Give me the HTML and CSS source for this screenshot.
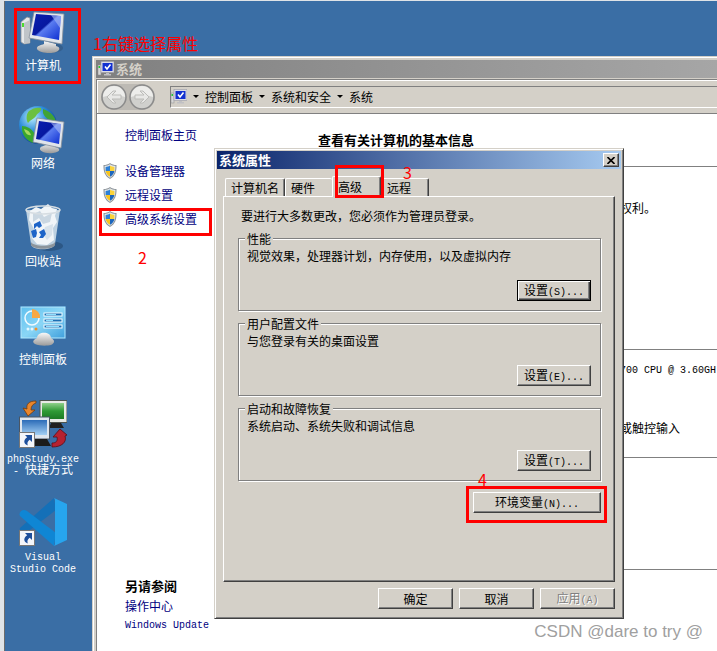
FILE: index.html
```
<!DOCTYPE html>
<html lang="zh-CN">
<head>
	<title>系统属性</title>
	<meta charset="utf-8">
	<link rel="stylesheet" href="styles.css">
</head>
<body>
	<!-- 公用图标 -->
	<svg class="defs" width="0" height="0">
		<defs>
			<linearGradient id="screen" x1="0" y1="0" x2="1" y2="1">
				<stop offset="0" stop-color="#0a1fb0"/>
				<stop offset="0.45" stop-color="#0618a0"/>
				<stop offset="0.5" stop-color="#5a7cf0"/>
				<stop offset="1" stop-color="#0a2bd0"/>
			</linearGradient>
			<linearGradient id="metal" x1="0" y1="0" x2="0" y2="1">
				<stop offset="0" stop-color="#f8f8f8"/>
				<stop offset="1" stop-color="#9a9a9a"/>
			</linearGradient>
			<radialGradient id="globe" cx="0.35" cy="0.3" r="0.75">
				<stop offset="0" stop-color="#b8ecff"/>
				<stop offset="0.5" stop-color="#2b8ad8"/>
				<stop offset="1" stop-color="#0b3c86"/>
			</radialGradient>
			<linearGradient id="panel" x1="0" y1="0" x2="1" y2="1">
				<stop offset="0" stop-color="#5fc0ee"/>
				<stop offset="0.5" stop-color="#8ad6f6"/>
				<stop offset="1" stop-color="#3f9fdc"/>
			</linearGradient>
			<linearGradient id="green" x1="0" y1="0" x2="0" y2="1">
				<stop offset="0" stop-color="#8fd08a"/>
				<stop offset="0.5" stop-color="#2f9a35"/>
				<stop offset="1" stop-color="#1c7a24"/>
			</linearGradient>
			<linearGradient id="sky" x1="0" y1="0" x2="0" y2="1">
				<stop offset="0" stop-color="#2c6cb8"/>
				<stop offset="1" stop-color="#a4d0f4"/>
			</linearGradient>
		</defs>
		<symbol id="shield" viewBox="0 0 14 16">
			<path d="M7 0C5 1.500 3 2 .5 2C.3 8 1.500 13 7 16C12.500 13 13.700 8 13.500 2C11 2 9 1.500 7 0Z" fill="#8e959b"/>
			<path d="M7 1.300C5.200 2.500 3.500 3 1.600 3C1.500 8 2.600 12.300 7 14.800C11.400 12.300 12.500 8 12.400 3C10.500 3 8.800 2.500 7 1.300Z" fill="#e4e8ea"/>
			<path d="M7 2.500C5.500 3.500 4.200 3.900 2.600 4V8H7Z" fill="#2c7fd6"/>
			<path d="M7 2.500C8.500 3.500 9.800 3.900 11.400 4V8H7Z" fill="#fbd33a"/>
			<path d="M2.600 8C3 10.500 4.500 12.500 7 13.700V8Z" fill="#f8c41e"/>
			<path d="M11.400 8C11 10.500 9.500 12.500 7 13.700V8Z" fill="#1c66bd"/>
		</symbol>
		<symbol id="pc" viewBox="0 0 16 16">
			<rect x="0" y="4" width="3" height="10" fill="#d8d8d8" stroke="#8a8a8a" stroke-width=".5"/>
			<rect x="0.500" y="5" width="1.500" height="2" fill="#2c3"/>
			<rect x="3" y="0.500" width="13" height="11" fill="#dcdce4" stroke="#9a9aa4" stroke-width=".6"/>
			<rect x="4.500" y="2" width="10" height="8" fill="#1230d0"/>
			<path d="M7 5.500L9 8L12.500 3.500" fill="none" stroke="#fff" stroke-width="1.600"/>
			<path d="M8 12H11V13H13V14.500H6V13H8Z" fill="#c0c0c4"/>
		</symbol>
		<symbol id="shortcut" viewBox="0 0 16 16">
			<rect x="0.500" y="0.500" width="15" height="15" fill="#f4f6fa" stroke="#777"/>
			<path d="M6 3H13V10L10.700 7.800C8.500 9.500 8 11 8.800 13.500C4.500 12 4 8 8.200 5.300Z" fill="#1d4f9c"/>
		</symbol>
	</svg>

	<div class="desktop">
		<ul class="icons">
			<li>
				<svg width="48" height="48" viewBox="0 0 48 48">
					<path d="M2 14L8 9L11 10V35L5 36L2 34Z" fill="#e6e8ea" stroke="#8b9096" stroke-width=".8"/>
					<path d="M5 15L11 12V35L5 36Z" fill="#bfc4c8"/>
					<rect x="3" y="15" width="2" height="4" fill="#4ddb2e"/>
					<ellipse cx="31" cy="40" rx="13" ry="5" fill="#2d4f75" opacity=".5"/>
					<path d="M25 33L37 36L37 38C41 39 42 42 37 44C32 46 20 45 18 41C17 38 22 37 25 36Z" fill="url(#metal)"/>
					<path d="M15 4L45 6L43 36L10 30Z" fill="#e3e7ec" stroke="#87909a" stroke-width=".8"/>
					<path d="M17 6L42 8L40 32L13 27Z" fill="url(#screen)"/>
					<path d="M32 7L42 8L41 20Z" fill="#9fb3f4" opacity=".65"/>
				</svg>
				<span>计算机</span>
			</li>
			<li>
				<svg width="48" height="48" viewBox="0 0 48 48">
					<circle cx="19" cy="19" r="19" fill="url(#globe)"/>
					<path d="M10 5C14 2 18 1 22 2C23 6 18 7 17 10C15 13 11 14 9 17C7 14 7 8 10 5Z" fill="#6cc040"/>
					<path d="M3 20C8 20 13 23 15 27C16 31 14 34 14 37C7 34 2 28 3 20Z" fill="#3aa72e"/>
					<path d="M24 3C31 5 37 11 37 17L31 14C28 13 25 10 24 7Z" fill="#41a334"/>
					<path d="M5 23C9 24 11 26 12 29C9 30 6 27 5 23Z" fill="#c4e56c" opacity=".8"/>
					<path d="M27 36L36 37V41C42 42 42 46 34 47C26 48 20 45 21 42C22 40 25 40 27 39Z" fill="url(#metal)"/>
					<path d="M18 12L45 16L42 42L14 36Z" fill="#e0e4ea" stroke="#848e99" stroke-width=".8"/>
					<path d="M20 15L42 18L40 38L17 33Z" fill="url(#screen)"/>
					<path d="M32 17L42 18L41 28Z" fill="#a7baf6" opacity=".65"/>
				</svg>
				<span>网络</span>
			</li>
			<li>
				<svg width="48" height="48" viewBox="0 0 48 48">
					<ellipse cx="30" cy="42" rx="14" ry="5" fill="#234870" opacity=".6"/>
					<path d="M7 6L12 40C12 47 35 47 36 40L41 6Z" fill="#c9d9e6" opacity=".92"/>
					<path d="M11 7L17 3L22 5L29 0L33 4L38 5L36 12L38 18L34 24L35 36L28 41L18 40L13 34L15 25L10 16Z" fill="#f1f5f8"/>
					<path d="M14 10L21 7L25 13L33 9L31 18L24 20L20 14L14 18Z" fill="#cad7e2"/>
					<path d="M26 23L34 20L33 31L28 36L24 30Z" fill="#d7e2eb"/>
					<path d="M12 38C15 43 33 43 36 38L36 41C34 46 14 46 12 41Z" fill="#8c949b"/>
					<ellipse cx="24" cy="6" rx="17" ry="4" fill="none" stroke="#d6dde2" stroke-width="1.500"/>
					<path d="M15 20L21 17L23 22L20 24L18 22L15 25ZM12 27L17 25L18 29L17 33L14 34ZM20 28L25 25L27 30L24 34H20L22 31Z" fill="#1d64c8"/>
				</svg>
				<span>回收站</span>
			</li>
			<li>
				<svg width="48" height="48" viewBox="0 0 48 48">
					<rect x="1" y="4" width="46" height="33" fill="#2b78b8"/>
					<rect x="2" y="5" width="44" height="31" fill="url(#panel)" stroke="#b7e6fa"/>
					<circle cx="13" cy="16" r="7" fill="none" stroke="#f0fbff" stroke-width="1.500"/>
					<path d="M13 16V7A8 8 0 0 1 21 16Z" fill="#f6a843"/>
					<circle cx="9" cy="27" r="1.500" fill="#e3f7ff"/>
					<circle cx="13" cy="27" r="1.500" fill="#e3f7ff"/>
					<circle cx="17" cy="27" r="1.500" fill="#f28f2a"/>
					<g fill="#1c6fb4" stroke="#f3fcff">
						<rect x="25" y="11" width="18" height="3"/>
						<rect x="25" y="17" width="18" height="3"/>
						<rect x="25" y="23" width="18" height="3"/>
					</g>
					<path d="M27 12.500H37M27 18.500H34M27 24.500H40" stroke="#8ee0ff"/>
					<path d="M18 36C18 29 32 29 32 36C36 38 36 41 32 43C28 44 20 44 16 42C13 40 14 38 18 36Z" fill="url(#metal)"/>
				</svg>
				<span>控制面板</span>
			</li>
			<li>
				<svg width="48" height="48" viewBox="0 0 48 48">
					<rect x="21" y="0.500" width="27" height="22" fill="#e8eae6" stroke="#4c524c"/>
					<rect x="23" y="3" width="22" height="16" fill="url(#green)"/>
					<path d="M32 23H42L45 28H30Z" fill="#202020"/>
					<rect x="0.500" y="17" width="30" height="22" fill="#dfe6ee" stroke="#4a5664"/>
					<rect x="3" y="20" width="25" height="15" fill="url(#sky)"/>
					<path d="M14 39H28L32 46H14Z" fill="#1b1b1b"/>
					<path d="M17 1C10 1 7 4 8 9L4 8L9 16L16 10L12 10C12 6 14 4 17 3Z" fill="#e9862c" stroke="#7a3c08" stroke-width=".8"/>
					<path d="M33 47C43 47 48 42 46 36L48 35L41 29L34 37H38C39 41 37 43 33 43Z" fill="#b62230" stroke="#5f0a12" stroke-width=".8"/>
					<use href="#shortcut" x="0" y="32" width="16" height="16"/>
				</svg>
				<span><span class="latin">phpStudy.exe</span><br><span class="latin">- </span>快捷方式</span>
			</li>
			<li>
				<svg width="48" height="48" viewBox="0 0 48 48">
					<path d="M35 0L1 30C0 33 4 37 7 35L37 12Z" fill="#1470b8"/>
					<path d="M1 18C-1 14 4 10 8 13L37 35L35 48Z" fill="#0f86d4"/>
					<path d="M35 0L48 6V42L35 48C36 47 36 46 36 45V3C36 2 36 1 35 0Z" fill="#27a5ee"/>
					<use href="#shortcut" x="0" y="32" width="16" height="16"/>
				</svg>
				<span><span class="latin">Visual</span><br><span class="latin">Studio Code</span></span>
			</li>
		</ul>

		<!-- 系统窗口 -->
		<div class="window system">
			<div class="title inactive">
				<svg width="16" height="16"><use href="#pc"/></svg>
				系统
			</div>
			<div class="toolbar">
				<div class="nav">
					<button aria-label="后退">
						<svg width="26" height="26" viewBox="0 0 26 26">
							<circle cx="13" cy="13" r="12" fill="#d0d0cd" stroke="#8b8b8b" stroke-width="1.500"/>
							<path d="M2 13A11 11 0 0 1 24 13Q13 9 2 13Z" fill="#ededeb"/>
							<path d="M6 13L12 7H15L11 11H20V15H11L15 19H12Z" fill="#e8e8e6" stroke="#bcbcb9"/>
						</svg>
					</button>
					<button aria-label="前进">
						<svg width="26" height="26" viewBox="0 0 26 26">
							<circle cx="13" cy="13" r="12" fill="#d0d0cd" stroke="#8b8b8b" stroke-width="1.500"/>
							<path d="M2 13A11 11 0 0 1 24 13Q13 9 2 13Z" fill="#ededeb"/>
							<path d="M20 13L14 7H11L15 11H6V15H15L11 19H14Z" fill="#e8e8e6" stroke="#bcbcb9"/>
						</svg>
					</button>
				</div>
				<div class="address">
					<svg width="16" height="16"><use href="#pc"/></svg>
					<i class="arrow"></i><span>控制面板</span>
					<i class="arrow"></i><span>系统和安全</span>
					<i class="arrow"></i><span>系统</span>
				</div>
			</div>
			<div class="content">
				<div class="sidebar">
					<a class="home" href="#">控制面板主页</a>
					<a class="task" href="#"><svg width="14" height="16"><use href="#shield"/></svg>设备管理器</a>
					<a class="task" href="#"><svg width="14" height="16"><use href="#shield"/></svg>远程设置</a>
					<a class="task" href="#"><svg width="14" height="16"><use href="#shield"/></svg>高级系统设置</a>
					<div class="see-also">
						<b>另请参阅</b>
						<a href="#">操作中心</a>
						<a class="latin" href="#">Windows Update</a>
					</div>
				</div>
				<div class="main">
					<h1>查看有关计算机的基本信息</h1>
					<div class="section edition">权利。</div>
					<div class="section spec">
						<span class="latin">700 CPU @ 3.60GH</span>
						<span>或触控输入</span>
					</div>
					<div class="section name"></div>
					<div class="section"></div>
				</div>
			</div>
		</div>

		<!-- 系统属性对话框 -->
		<div class="window dialog">
			<div class="title">
				系统属性
				<button class="close" aria-label="关闭">
					<svg width="8" height="7" viewBox="0 0 8 7"><path d="M0.500 0L7.500 7M7.500 0L0.500 7" stroke="#000" stroke-width="1.600"/></svg>
				</button>
			</div>
			<div class="tabs">
				<button class="tab first">计算机名</button>
				<button class="tab before">硬件</button>
				<button class="tab active">高级</button>
				<button class="tab after">远程</button>
			</div>
			<div class="pane">
				<p class="note">要进行大多数更改，您必须作为管理员登录。</p>
				<fieldset>
					<legend>性能</legend>
					<p>视觉效果，处理器计划，内存使用，以及虚拟内存</p>
					<button class="btn default">设置<span class="latin">(S)...</span></button>
				</fieldset>
				<fieldset>
					<legend>用户配置文件</legend>
					<p>与您登录有关的桌面设置</p>
					<button class="btn">设置<span class="latin">(E)...</span></button>
				</fieldset>
				<fieldset>
					<legend>启动和故障恢复</legend>
					<p>系统启动、系统失败和调试信息</p>
					<button class="btn">设置<span class="latin">(T)...</span></button>
				</fieldset>
				<button class="btn env">环境变量<span class="latin">(N)...</span></button>
			</div>
			<div class="footer">
				<button class="btn">确定</button>
				<button class="btn">取消</button>
				<button class="btn" disabled>应用<span class="latin">(A)</span></button>
			</div>
		</div>

		<!-- 步骤标注 -->
		<div class="mark mark1"></div>
		<div class="mark mark2"></div>
		<div class="mark mark3"></div>
		<div class="mark mark4"></div>
		<span class="step step1">1右键选择属性</span>
		<span class="step step2">2</span>
		<span class="step step3">3</span>
		<span class="step step4">4</span>
		<span class="watermark">CSDN @dare to try @</span>
	</div>
</body>
</html>
```

FILE: styles.css
```
*{
	box-sizing: border-box;
}
body{
	margin: 0;
	font: 12px/16px "Noto Sans CJK SC", sans-serif;
	color: #000;
}
p,h1,ul,fieldset{
	margin: 0;
	padding: 0;
}
button{
	font: inherit;
	color: inherit;
	padding: 0;
}
a{
	color: #000080;
	text-decoration: none;
}
svg{
	display: block;
	flex-shrink: 0;
}
.defs{
	position: absolute;
}
/*英文等宽，6px 一个字符*/
.latin{
	font-family: "Liberation Mono", monospace;
	font-size: 10px;
}

.desktop{
	position: relative;
	min-height: 100vh;
	overflow: hidden;
	background: #3a6ea5;
	border-top: 1px solid #dfe3e7;
	border-left: 4px solid #dfe3e7;
	box-shadow: inset 1px 0 #6c6c6c;
}

/*桌面图标*/
.icons{
	width: 78px;
	padding-top: 7px;
	list-style: none;
	color: #fff;
	text-align: center;
	line-height: 12px;
}
.icons li{
	display: flex;
	flex-direction: column;
	align-items: center;
	gap: 3px;
	height: 98px;
	white-space: nowrap;
}
.icons .latin{
	line-height: 0;
}

/*窗口*/
.window{
	position: absolute;
	padding: 2px;
	background: #d4d0c8;
	border: 1px solid;
	border-color: #d4d0c8 #404040 #404040 #d4d0c8;
	box-shadow: inset 1px 1px #fff, inset -1px -1px #808080;
}
.title{
	display: flex;
	flex-shrink: 0;
	align-items: center;
	height: 18px;
	padding: 0 2px;
	font-size: 13px;
	font-weight: bold;
	color: #fff;
	background: linear-gradient(to right, #0a246a, #a6caf0);
}
.title.inactive{
	gap: 2px;
	color: #d4d0c8;
	background: linear-gradient(to right, #808080, #a6a6a6);
}

.system{
	top: 55px;
	left: 88px;
	right: 0;
	bottom: 0;
	display: flex;
	flex-direction: column;
	padding: 3px 0 0 3px;
	border-width: 1px 0 0 1px;
	box-shadow: inset 1px 1px #fff;
}
.toolbar{
	display: flex;
	flex-shrink: 0;
	align-items: center;
	height: 35px;
	margin-top: 1px;
	padding-left: 4px;
	border: 1px solid #808080;
	border-right: 0;
	box-shadow: inset 1px 1px #fff;
}
.nav{
	display: flex;
	gap: 2px;
	margin-right: 15px;
	border-radius: 13px;
	background: #bdbab4;
}
.nav button{
	border: 0;
	background: none;
}
.address{
	flex: 1;
	display: flex;
	align-items: center;
	gap: 6px;
	height: 22px;
	border: 1px solid #808080;
	border-right: 0;
	border-bottom-color: #fff;
}
.arrow{
	border: 3px solid transparent;
	border-top-color: #000;
	border-bottom: 0;
}
.content{
	flex: 1;
	display: flex;
	background: #fff;
	border-left: 1px solid #808080;
}
.sidebar{
	display: flex;
	flex-direction: column;
	width: 221px;
	padding: 13px 6px 17px;
}
.home{
	margin-bottom: 16px;
	padding-left: 22px;
}
.task{
	display: flex;
	align-items: center;
	gap: 8px;
	height: 24px;
}
.see-also{
	display: flex;
	flex-direction: column;
	gap: 4px;
	margin-top: auto;
	padding-left: 22px;
}
.see-also b{
	font-size: 13px;
}
.main{
	flex: 1;
	min-width: 0;
	padding-top: 18px;
}
.main h1{
	margin-bottom: 18px;
	font-size: 13px;
	line-height: 16px;
}
.section{
	padding-left: 302px;
	border-top: 1px solid #808080;
	white-space: nowrap;
}
.edition{
	height: 183px;
	padding-top: 33px;
}
.spec{
	display: flex;
	flex-direction: column;
	gap: 41px;
	height: 108px;
	padding-top: 13px;
}
.name{
	height: 112px;
}

/*对话框*/
.dialog{
	top: 147px;
	left: 210px;
	width: 410px;
}
.close{
	display: flex;
	align-items: center;
	justify-content: center;
	width: 16px;
	height: 14px;
	margin-left: auto;
}
.close,.btn{
	background: #d4d0c8;
	border: 1px solid;
	border-color: #fff #404040 #404040 #fff;
	box-shadow: inset -1px -1px #808080;
}
.tabs{
	display: flex;
	align-items: flex-end;
	height: 27px;
	padding-left: 8px;
}
.tab{
	height: 18px;
	padding: 0 5px;
	text-align: left;
	line-height: 18px;
	background: #d4d0c8;
	border: 1px solid #fff;
	border-right-color: #404040;
	border-bottom: 0;
	border-radius: 2px 2px 0 0;
	box-shadow: inset -1px 0 #808080;
}
.tab.first{
	width: 60px;
}
.tab.before{
	width: 47px;
	border-right: 0;
	box-shadow: none;
}
.tab.active{
	position: relative;
	width: 49px;
	height: 21px;
	margin-bottom: -1px;
}
.tab.after{
	width: 48px;
	border-left-color: transparent;
}
.pane{
	display: flex;
	flex-direction: column;
	gap: 6px;
	margin: 0 6px;
	padding: 11px 13px 68px 14px;
	border: 1px solid #fff;
	border-right-color: #404040;
	border-bottom-color: #404040;
	box-shadow: inset -1px -1px #808080;
}
.note{
	padding: 0 0 2px 3px;
}
fieldset{
	display: flex;
	flex-direction: column;
	padding: 3px 9px 9px 8px;
	border: 1px solid #808080;
	box-shadow: 1px 1px #fff, inset 1px 1px #fff;
}
legend{
	margin-left: -2px;
	padding: 0 2px;
	line-height: 13px;
	background: #d4d0c8;
}
.btn{
	width: 75px;
	height: 21px;
	line-height: 18px;
}
fieldset .btn{
	align-self: flex-end;
	width: 74px;
	margin-top: 16px;
}
.btn.default{
	border-color: #000;
	box-shadow: inset 1px 1px #fff, inset -1px -1px #404040, inset -2px -2px #808080;
}
.btn:disabled{
	color: #808080;
	text-shadow: 1px 1px #fff;
}
.btn.env{
	align-self: flex-end;
	width: 128px;
	margin-top: 5px;
}
.footer{
	display: flex;
	justify-content: flex-end;
	gap: 6px;
	padding: 6px 6px 7px 0;
}

/*红色标注*/
.mark{
	position: absolute;
	border: 3px solid #f00;
}
.mark1{
	top: 7px;
	left: 10px;
	width: 67px;
	height: 76px;
}
.mark2{
	top: 207px;
	left: 95px;
	width: 113px;
	height: 28px;
}
.mark3{
	top: 164px;
	left: 331px;
	width: 49px;
	height: 33px;
}
.mark4{
	top: 485px;
	left: 462px;
	width: 141px;
	height: 37px;
}
.step{
	position: absolute;
	font-size: 16px;
	color: #f00;
}
.step1{
	top: 34px;
	left: 89px;
}
.step2{
	top: 248px;
	left: 134px;
}
.step3{
	top: 163px;
	left: 399px;
}
.step4{
	top: 470px;
	left: 474px;
}
.watermark{
	position: absolute;
	right: 14px;
	bottom: 9px;
	font: 17px/20px "Liberation Sans", Arial, sans-serif;
	color: #a0a0a0;
}
```
